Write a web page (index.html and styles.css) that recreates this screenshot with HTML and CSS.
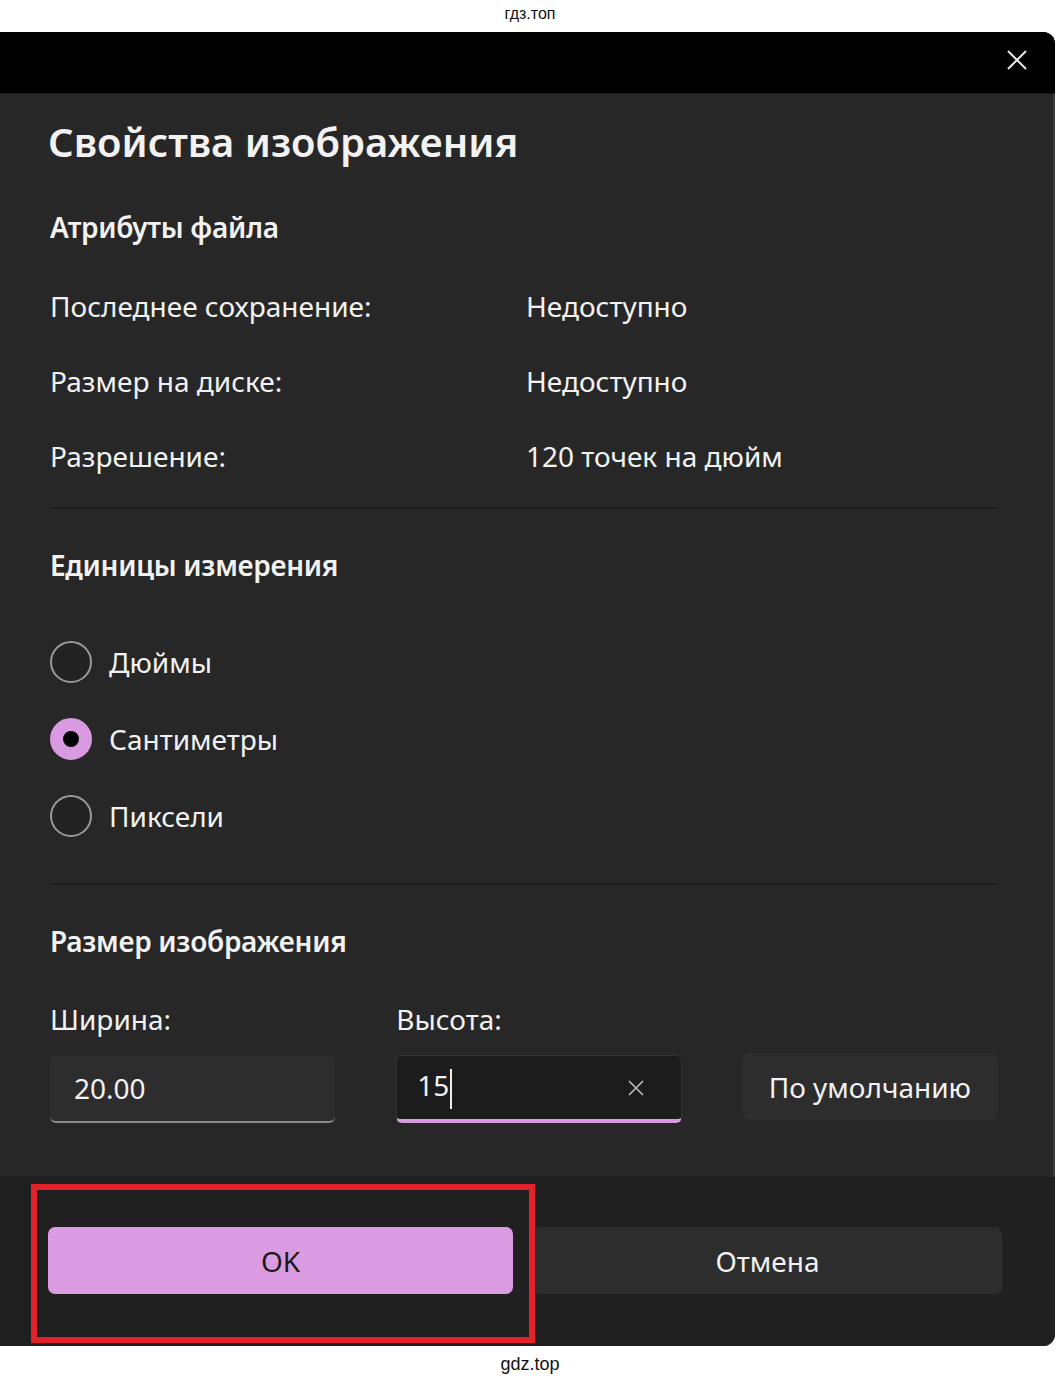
FILE: index.html
```html
<!DOCTYPE html>
<html lang="ru">
<head>
  <meta charset="UTF-8">
  <title>Свойства изображения</title>
  <link rel="stylesheet" href="styles.css">
</head>
<body>
  <div class="mark mark-top">гдз.топ</div>

  <div class="dialog">
    <div class="titlebar">
      <svg class="close" width="22" height="22" viewBox="0 0 22 22">
        <path d="M2 2 L20 20 M20 2 L2 20" stroke="#e6e6e6" stroke-width="2" fill="none"/>
      </svg>
    </div>

    <div class="content">
      <h1 class="title">Свойства изображения</h1>

      <h2 class="section">Атрибуты файла</h2>
      <div class="attrs">
        <div class="attr-label">Последнее сохранение:</div>
        <div class="attr-value">Недоступно</div>
        <div class="attr-label">Размер на диске:</div>
        <div class="attr-value">Недоступно</div>
        <div class="attr-label">Разрешение:</div>
        <div class="attr-value">120 точек на дюйм</div>
      </div>

      <div class="divider"></div>

      <h2 class="section">Единицы измерения</h2>
      <div class="radios">
        <div class="radio"><span class="dot"></span>Дюймы</div>
        <div class="radio checked"><span class="dot"></span>Сантиметры</div>
        <div class="radio"><span class="dot"></span>Пиксели</div>
      </div>

      <div class="divider"></div>

      <h2 class="section">Размер изображения</h2>
      <div class="size-row">
        <div class="field">
          <div class="field-label">Ширина:</div>
          <div class="input">20.00</div>
        </div>
        <div class="field">
          <div class="field-label">Высота:</div>
          <div class="input focused">
            <span class="value">15<span class="caret"></span></span>
            <svg class="clear" width="18" height="18" viewBox="0 0 18 18">
              <path d="M2 2 L16 16 M16 2 L2 16" stroke="#bdbdbd" stroke-width="1.6" fill="none"/>
            </svg>
          </div>
        </div>
        <button class="btn btn-default">По умолчанию</button>
      </div>
    </div>

    <div class="footer">
      <button class="btn btn-ok">OK</button>
      <button class="btn btn-cancel">Отмена</button>
      <div class="highlight"></div>
    </div>
  </div>

  <div class="mark mark-bottom">gdz.top</div>
</body>
</html>
```

FILE: styles.css
```css
body {
  margin: 0;
  background: #ffffff;
  font-family: 'Noto Sans', 'Open Sans', sans-serif;
  color: #f2f2f2;
}
.mark {
  font-family: 'Liberation Sans', Arial, sans-serif;
  color: #111;
  text-align: center;
}
.mark-top {
  height: 32px;
  line-height: 28px;
  font-size: 16px;
}
.mark-bottom {
  height: 38px;
  line-height: 36px;
  font-size: 18px;
}
.dialog {
  width: 1055px;
  height: 1314px;
  background: #272727;
  border-radius: 0 12px 12px 0;
  overflow: hidden;
  display: flex;
  flex-direction: column;
  box-shadow: inset -2px 0 0 #3a3a3a;
}
.titlebar {
  height: 61px;
  background: #000;
  display: flex;
  justify-content: flex-end;
  align-items: center;
  padding-right: 27px;
  border-bottom: 1px solid #1a1a1a;
}
.close {
  margin-top: -6px;
}
.content {
  flex: 1;
  padding: 0 57px 0 50px;
}
.title {
  margin: 18px 0 0 -2px;
  font-size: 40px;
  font-weight: 600;
  line-height: 60px;
}
.section {
  margin: 0;
  font-size: 28px;
  font-weight: 600;
  line-height: 40px;
  letter-spacing: -0.3px;
}
.content > .section:nth-of-type(1) {
  margin-top: 35px;
}
.attrs {
  display: grid;
  grid-template-columns: 476px 1fr;
  grid-auto-rows: 75px;
  margin-top: 21px;
  font-size: 28px;
  align-items: center;
}
.divider {
  height: 2px;
  background: #202020;
  margin: 14px 0 0;
}
.radios + .divider {
  margin-top: 46px;
}
.divider + .section {
  margin-top: 36px;
}
.radios {
  margin-top: 56px;
  display: flex;
  flex-direction: column;
  gap: 35px;
}
.radio {
  display: flex;
  align-items: center;
  gap: 17px;
  font-size: 28px;
  height: 42px;
}
.dot {
  width: 38px;
  height: 38px;
  border-radius: 50%;
  border: 2px solid #9a9a9a;
  background: #232323;
  box-sizing: content-box;
}
.radio.checked .dot {
  border: 13px solid #da9ae2;
  width: 16px;
  height: 16px;
  background: #000;
}
.size-row {
  display: flex;
  align-items: flex-end;
  margin-top: 38px;
}
.field {
  width: 286px;
  margin-right: 61px;
}
.field-label {
  font-size: 28px;
  line-height: 40px;
  margin-bottom: 16px;
}
.input {
  height: 68px;
  box-sizing: border-box;
  background: #2d2d2d;
  border-radius: 6px;
  border-bottom: 2px solid #8a8a8a;
  font-size: 28px;
  display: flex;
  align-items: center;
  padding: 0 24px;
}
.input.focused {
  background: #1c1c1c;
  border: 1px solid #333;
  border-bottom: 4px solid #d89ae0;
  justify-content: space-between;
  padding: 0 36px 0 20px;
}
.caret {
  display: inline-block;
  width: 2px;
  height: 40px;
  background: #eee;
  vertical-align: middle;
  margin-left: 1px;
}
.btn {
  font-family: inherit;
  font-size: 28px;
  border: none;
  border-radius: 7px;
  color: #f2f2f2;
  background: #2d2d2d;
  cursor: pointer;
}
.btn-default {
  width: 257px;
  height: 67px;
  margin-left: -1px;
  margin-bottom: 3px;
}
.footer {
  position: relative;
  height: 168px;
  background: #202020;
  display: flex;
  align-items: center;
  gap: 20px;
  padding: 0 53px 0 48px;
  border-top: 1px solid #1c1c1c;
}
.btn-ok,
.btn-cancel {
  height: 67px;
  margin-top: -3px;
}
.btn-ok {
  width: 465px;
  background: #da9be3;
  color: #1a1a1a;
}
.btn-cancel {
  flex: 1;
}
.highlight {
  position: absolute;
  left: 31px;
  top: 6px;
  width: 492px;
  height: 147px;
  border: 6px solid #e3212a;
}
```
